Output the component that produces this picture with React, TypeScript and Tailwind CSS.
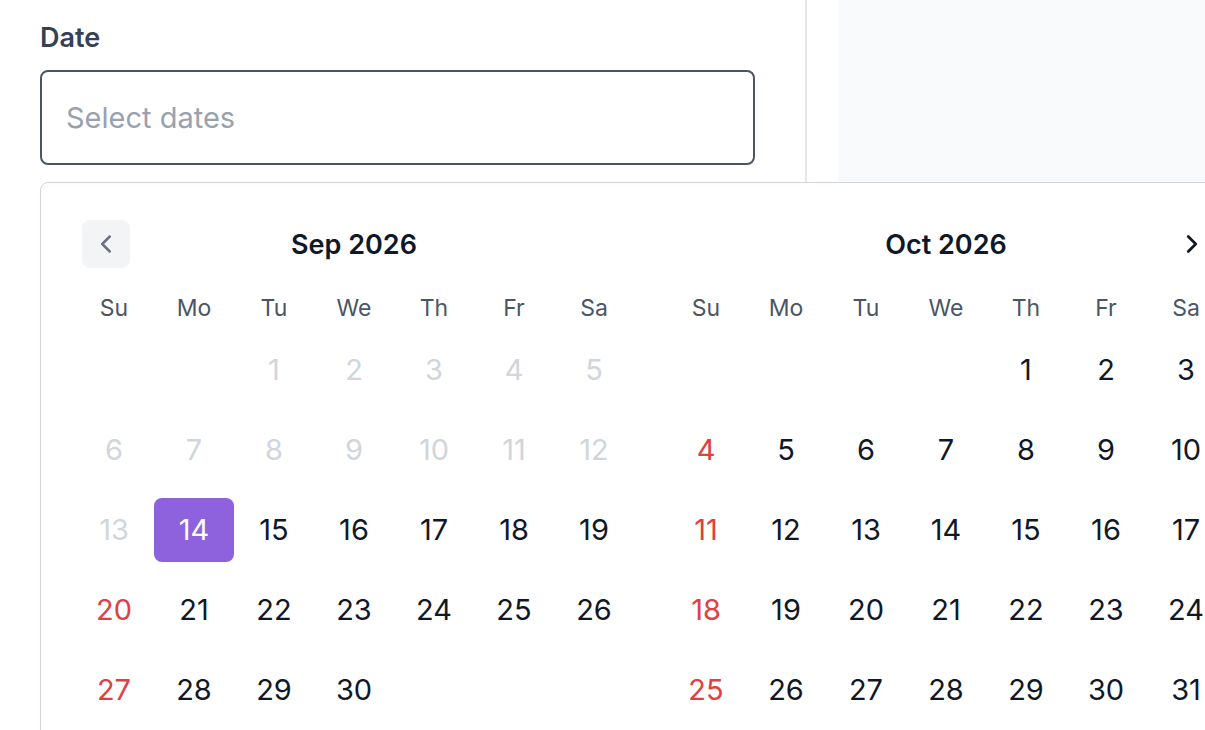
import { ChevronLeft, ChevronRight } from "lucide-react";

const WEEKDAYS = ["Su", "Mo", "Tu", "We", "Th", "Fr", "Sa"];

interface MonthProps {
  title: string;
  startDay: number;
  days: number;
  disabledBefore?: number;
  selected?: number;
  side: "left" | "right";
}

function Month({ title, startDay, days, disabledBefore = 0, selected, side }: MonthProps) {
  const cells: (number | null)[] = [];
  for (let i = 0; i < startDay; i++) cells.push(null);
  for (let d = 1; d <= days; d++) cells.push(d);
  while (cells.length % 7 !== 0) cells.push(null);

  return (
    <div className="w-[560px] shrink-0">
      <div className="relative flex h-12 items-center justify-center">
        {side === "left" ? (
          <button className="absolute left-2 top-0 flex h-12 w-12 items-center justify-center rounded-lg bg-gray-100 text-gray-500">
            <ChevronLeft size={30} strokeWidth={2} />
          </button>
        ) : (
          <button className="absolute right-[10px] top-0 flex h-12 w-12 items-center justify-center text-gray-900">
            <ChevronRight size={30} strokeWidth={2.2} />
          </button>
        )}
        <span className="pt-[2px] text-[27px] font-semibold text-gray-900">{title}</span>
      </div>
      <div className="mt-5 grid h-10 grid-cols-7 items-center">
        {WEEKDAYS.map((w) => (
          <span key={w} className="text-center text-[23px] text-gray-600">
            {w}
          </span>
        ))}
      </div>
      <div className="mt-[2px] grid grid-cols-7">
        {cells.map((d, i) => {
          let cls = "text-gray-900";
          if (d !== null && d < disabledBefore) cls = "text-gray-300";
          else if (i % 7 === 0) cls = "text-[#e04040]";
          const isSel = d === selected;
          return (
            <div key={i} className="flex h-20 items-center justify-center">
              {d !== null && (
                <span
                  className={`flex h-16 w-20 items-center justify-center rounded-lg text-[29px] ${
                    isSel ? "bg-[#8e62dd] text-white" : cls
                  }`}
                >
                  {d}
                </span>
              )}
            </div>
          );
        })}
      </div>
    </div>
  );
}

export default function App() {
  return (
    <div
      className="relative flex h-screen w-screen overflow-hidden bg-white"
      style={{ fontFamily: "Inter, 'Noto Sans', sans-serif" }}
    >
      <div className="w-[807px] shrink-0 border-r-2 border-gray-200 pl-10 pr-[50px] pt-[22px]">
        <label className="block h-8 text-[27px] font-semibold leading-8 text-gray-700">Date</label>
        <div className="mt-4 flex h-[95px] items-center rounded-lg border-2 border-gray-600 px-6 text-[29px] text-gray-400">
          Select dates
        </div>
      </div>
      <div className="ml-[31px] flex-1 bg-gray-50" />

      <div className="absolute left-10 top-[182px] flex w-[1260px] gap-8 rounded-lg border border-gray-300 bg-white px-[33px] pb-8 pt-[37px]">
        <Month title="Sep 2026" startDay={2} days={30} disabledBefore={14} selected={14} side="left" />
        <Month title="Oct 2026" startDay={4} days={31} side="right" />
      </div>
    </div>
  );
}
